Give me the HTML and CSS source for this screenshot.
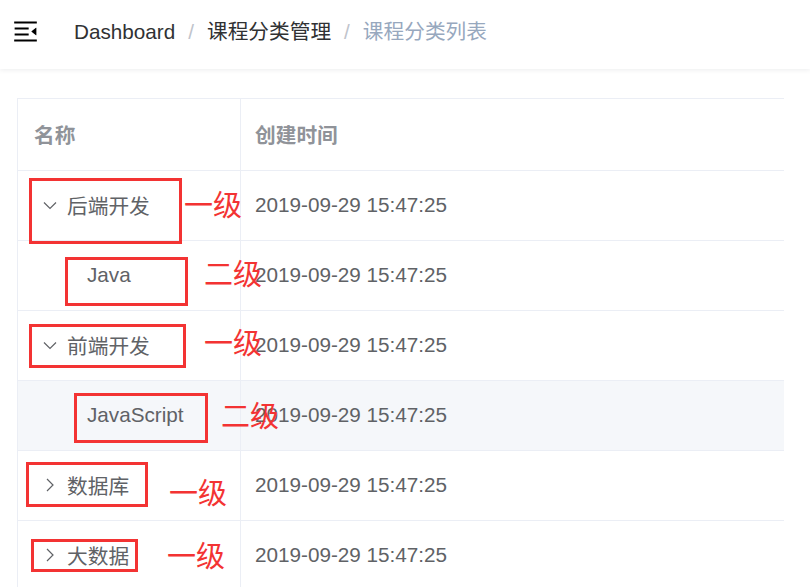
FILE: index.html
```html
<!DOCTYPE html>
<html lang="zh-CN">
<head>
<meta charset="utf-8">
<title>课程分类列表</title>
<link rel="stylesheet" href="styles.css">
</head>
<body>
<div class="navbar">
  <svg class="hamburger" viewBox="0 0 1024 1024" width="29" height="29">
    <path transform="rotate(180 512 512)" d="M408 442h480c4.4 0 8-3.6 8-8v-56c0-4.4-3.6-8-8-8H408c-4.4 0-8 3.6-8 8v56c0 4.4 3.6 8 8 8zm-8 204c0 4.4 3.6 8 8 8h480c4.4 0 8-3.6 8-8v-56c0-4.4-3.6-8-8-8H408c-4.4 0-8 3.6-8 8v56zm504-486H120c-4.4 0-8 3.6-8 8v56c0 4.4 3.6 8 8 8h784c4.4 0 8-3.6 8-8v-56c0-4.4-3.6-8-8-8zm0 632H120c-4.4 0-8 3.6-8 8v56c0 4.4 3.6 8 8 8h784c4.4 0 8-3.6 8-8v-56c0-4.4-3.6-8-8-8zM142.4 642.1L298.7 519a8.840 8.840 0 0 0 0-13.9L142.4 381.9c-5.8-4.6-14.4-.5-14.4 6.9v246.3a8.9 8.9 0 0 0 14.4 7z" fill="#000"/>
  </svg>
  <nav class="breadcrumb">
    <span class="crumb">Dashboard</span>
    <span class="sep">/</span>
    <span class="crumb">课程分类管理</span>
    <span class="sep">/</span>
    <span class="crumb current">课程分类列表</span>
  </nav>
</div>

<div class="app">
  <div class="table">
    <div class="row head">
      <div class="cell first">名称</div>
      <div class="cell">创建时间</div>
    </div>
    <div class="row">
      <div class="cell first parent"><svg class="arrow" viewBox="0 0 14 14" width="14" height="14"><path d="M1 4.5 L7 10.5 L13 4.5" /></svg><span>后端开发</span></div>
      <div class="cell">2019-09-29 15:47:25</div>
    </div>
    <div class="row">
      <div class="cell first child">Java</div>
      <div class="cell">2019-09-29 15:47:25</div>
    </div>
    <div class="row">
      <div class="cell first parent"><svg class="arrow" viewBox="0 0 14 14" width="14" height="14"><path d="M1 4.5 L7 10.5 L13 4.5" /></svg><span>前端开发</span></div>
      <div class="cell">2019-09-29 15:47:25</div>
    </div>
    <div class="row hover">
      <div class="cell first child">JavaScript</div>
      <div class="cell">2019-09-29 15:47:25</div>
    </div>
    <div class="row">
      <div class="cell first parent"><svg class="arrow" viewBox="0 0 14 14" width="14" height="14"><path d="M4 1 L10 7 L4 13" /></svg><span>数据库</span></div>
      <div class="cell">2019-09-29 15:47:25</div>
    </div>
    <div class="row">
      <div class="cell first parent"><svg class="arrow" viewBox="0 0 14 14" width="14" height="14"><path d="M4 1 L10 7 L4 13" /></svg><span>大数据</span></div>
      <div class="cell">2019-09-29 15:47:25</div>
    </div>
  </div>
</div>

<div class="mark box b1"></div>
<div class="mark box b2"></div>
<div class="mark box b3"></div>
<div class="mark box b4"></div>
<div class="mark box b5"></div>
<div class="mark box b6"></div>
<div class="mark label l1">一级</div>
<div class="mark label l2">二级</div>
<div class="mark label l3">一级</div>
<div class="mark label l4">二级</div>
<div class="mark label l5">一级</div>
<div class="mark label l6">一级</div>
</body>
</html>
```

FILE: styles.css
```css
html, body {
  margin: 0;
  padding: 0;
  background: #ffffff;
  overflow: hidden;
}

body {
  font-family: "Liberation Sans", "Noto Sans CJK SC", sans-serif;
  font-size: 20.7px;
  color: #606266;
  position: relative;
  height: 587px;
}

.navbar {
  height: 69px;
  box-sizing: border-box;
  padding-bottom: 4px;
  display: flex;
  align-items: center;
  box-shadow: 0 1px 5px rgba(0, 21, 41, 0.08);
  position: relative;
}

.hamburger {
  margin-left: 11px;
  margin-bottom: 2px;
  display: block;
}

.breadcrumb {
  margin-left: 34px;
  display: flex;
  align-items: center;
  line-height: 1;
}

.crumb {
  color: #303133;
}

.crumb.current {
  color: #97a8be;
}

.sep {
  color: #c0c4cc;
  margin: 0 13px;
  font-weight: 400;
}

.app {
  padding: 29px 0 0 17px;
}

.table {
  width: 766px;
  border-top: 1px solid #ebeef5;
  border-left: 1px solid #ebeef5;
}

.row {
  display: grid;
  grid-template-columns: 223px 1fr;
  height: 70px;
  box-sizing: border-box;
  border-bottom: 1px solid #ebeef5;
}

.row.head {
  height: 72px;
  color: #909399;
  font-weight: 700;
}

.row.hover {
  background: #f5f7fa;
}

.cell {
  display: flex;
  align-items: center;
  padding-left: 14px;
  padding-bottom: 2px;
  white-space: nowrap;
}

.cell.first {
  border-right: 1px solid #ebeef5;
  padding-left: 16px;
}

.cell.parent {
  padding-left: 25px;
}

.cell.child {
  padding-left: 69px;
}

.arrow {
  width: 14px;
  height: 14px;
  margin-right: 10px;
  fill: none;
  stroke: #606266;
  stroke-width: 1.2;
  flex: none;
}

.mark {
  position: absolute;
}

.box {
  border: 3px solid #f33333;
  box-sizing: border-box;
}

.b1 { left: 29px; top: 178px; width: 153px; height: 66px; }
.b2 { left: 65px; top: 257px; width: 123px; height: 49px; }
.b3 { left: 29px; top: 324px; width: 157px; height: 44px; }
.b4 { left: 74px; top: 393px; width: 134px; height: 50px; }
.b5 { left: 26px; top: 462px; width: 122px; height: 45px; }
.b6 { left: 31px; top: 539px; width: 107px; height: 33px; }

.label {
  color: #f33333;
  font-family: "Noto Sans CJK SC", sans-serif;
  font-size: 29px;
  line-height: 1;
  white-space: nowrap;
}

.l1 { left: 184px; top: 189px; }
.l2 { left: 204px; top: 258px; }
.l3 { left: 204px; top: 327px; }
.l4 { left: 221px; top: 400px; }
.l5 { left: 169px; top: 477px; }
.l6 { left: 167px; top: 540px; }
```
